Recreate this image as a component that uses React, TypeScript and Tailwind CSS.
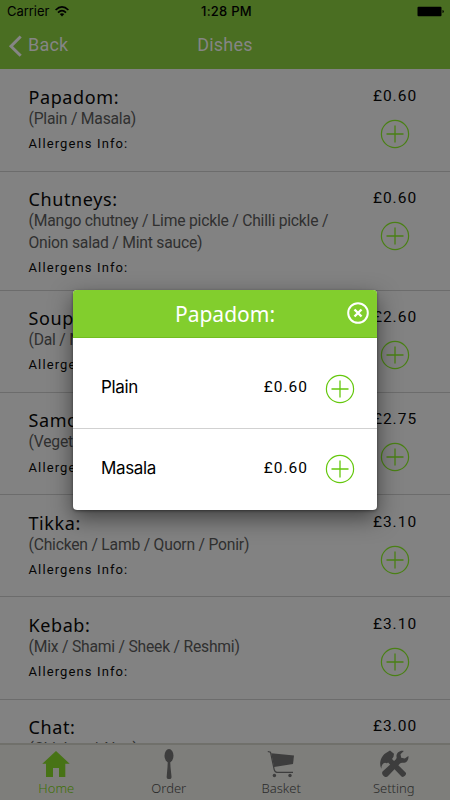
import React from "react";

type Dish = { name: string; lines: string[]; price: string };

const dishes: Dish[] = [
  { name: "Papadom:", lines: ["(Plain / Masala)"], price: "£0.60" },
  { name: "Chutneys:", lines: ["(Mango chutney / Lime pickle / Chilli pickle /", "Onion salad / Mint sauce)"], price: "£0.60" },
  { name: "Soup:", lines: ["(Dal / Mix)"], price: "£2.60" },
  { name: "Samosa:", lines: ["(Vegetable / Meat)"], price: "£2.75" },
  { name: "Tikka:", lines: ["(Chicken / Lamb / Quorn / Ponir)"], price: "£3.10" },
  { name: "Kebab:", lines: ["(Mix / Shami / Sheek / Reshmi)"], price: "£3.10" },
  { name: "Chat:", lines: ["(Chicken / Aloo)"], price: "£3.00" },
];

function Plus({ className }: { className: string }) {
  return (
    <svg className={`h-[30px] w-[30px] shrink-0 ${className}`} viewBox="0 0 30 30" fill="none" stroke="currentColor">
      <circle cx="15" cy="15" r="13.6" strokeWidth="1.2" />
      <path d="M15 6.5v17M6.5 15h17" strokeWidth="1.3" />
    </svg>
  );
}

function DishRow({ dish }: { dish: Dish }) {
  return (
    <div className="flex min-h-[102.2px] shrink-0 justify-between border-b border-[#6c6c6c] pt-[16.4px] pr-[33px] pb-[12.2px] pl-[28.5px]">
      <div className="whitespace-nowrap">
        <div className="h-[22px] font-['Noto_Sans',sans-serif] text-[18px] leading-[22px] tracking-[0.6px] text-[#050505]">{dish.name}</div>
        {dish.lines.map((line) => (
          <div key={line} className="h-[21.5px] font-[Roboto,sans-serif] text-[15.7px] leading-[22px] tracking-[-0.22px] text-[#303030]">{line}</div>
        ))}
        <div className="mt-[3.6px] h-[21px] font-[Roboto,sans-serif] text-[13px] leading-[21px] tracking-[1.12px] text-[#050505]">Allergens Info:</div>
      </div>
      <div className="flex w-[44px] flex-col items-center">
        <div className="h-[19px] font-[Roboto,sans-serif] text-[15.5px] leading-[20px] tracking-[1px] text-[#050505]">{dish.price}</div>
        <Plus className="mt-[14px] text-[#4a8015]" />
      </div>
    </div>
  );
}

function HomeIcon() {
  return (
    <svg className="h-[32px] w-[32px]" viewBox="0 0 32 32" fill="currentColor">
      <path d="M16 3 2.3 15.7H6V29h7V20h6v9h6.3V15.7h4.4z" />
    </svg>
  );
}
function SpoonIcon() {
  return (
    <svg className="h-[32px] w-[32px]" viewBox="0 0 32 32" fill="currentColor">
      <ellipse cx="16" cy="7.8" rx="4.5" ry="6.8" />
      <path d="M14.8 13h2.4l.3 6 1 9.5c.2 1.7-.9 2.6-2.4 2.6s-2.6-.9-2.4-2.6l.8-9.5z" />
    </svg>
  );
}
function CartIcon() {
  return (
    <svg className="h-[32px] w-[32px]" viewBox="0 0 32 32" fill="currentColor">
      <path d="M6.2 5.3 29 7.4 28 16 9 19z" />
      <path d="M2.8 3.5 5.5 4.2 9.2 21.7Q9.8 24.3 12 24.3H28" fill="none" stroke="currentColor" strokeWidth="1.2" />
      <circle cx="9.4" cy="27.5" r="1.7" />
      <circle cx="25" cy="27.5" r="1.7" />
    </svg>
  );
}
function ToolsIcon() {
  return (
    <svg className="h-[32px] w-[32px]" viewBox="0 0 32 32" fill="currentColor">
      <path d="M9.2 4.2 12 2.6l4 3.2-.5 3-1.5 2.2 13.6 13.4c1.8 1.9-2.1 5.9-4.1 4.1L10.1 14.4c-.8 1-2.2 1-3 .3-2.2.2-3.7 2.2-3.8 6-2.7-5.2-.4-13.5 5.9-16.5z" />
      <path d="M25.8 2.9c-4.1-1-8.1 2.2-7.2 6.2.2 1-.2 1.8-.9 2.5L4.8 23.3c-2.5 2.5 2.5 7.5 5 5L22 15.6c.7-.7 1.5-.9 2.5-.8 4 .4 6.4-2.9 5.9-6.9l-3.6 2.7-3.6-.9-.7-3.4z" />
    </svg>
  );
}

const tabs = [
  { label: "Home", Icon: HomeIcon, active: true },
  { label: "Order", Icon: SpoonIcon, active: false },
  { label: "Basket", Icon: CartIcon, active: false },
  { label: "Setting", Icon: ToolsIcon, active: false },
];

function Option({ name, last }: { name: string; last?: boolean }) {
  return (
    <div className={`flex shrink-0 items-center pr-[22px] pl-7 ${last ? "h-[80px]" : "h-[91px] border-b border-[#d1d1d1] pt-[11px]"}`}>
      <span className="flex-1 pb-px font-[Inter,sans-serif] text-[17px] tracking-[-0.35px] text-black">{name}</span>
      <span className="mr-[17px] pb-px font-[Roboto,sans-serif] text-[15.5px] tracking-[1px] text-black">£0.60</span>
      <Plus className="text-[#65c80e]" />
    </div>
  );
}

export default function App() {
  return (
    <div className="relative flex h-[800px] w-[450px] flex-col overflow-hidden bg-[#828282]">
      <header className="flex h-[69px] shrink-0 flex-col bg-[#4a6e22]">
        <div className="grid h-[23px] grid-cols-3 items-center pr-[6px] pl-[7px] font-[Inter,sans-serif] text-[13px] leading-[23px] text-black">
          <div className="flex items-center gap-[6px]">
            <span className="tracking-[-0.05px]">Carrier</span>
            <svg className="mb-px h-[11px] w-[14px]" viewBox="0 0 14 11" fill="none" stroke="black" strokeWidth="1.7">
              <path d="M.6 4Q7-2.1 13.4 4M3 6.6Q7 2.8 11 6.6" />
              <path d="M7 10.4 4.7 8.1Q7 6.2 9.3 8.1Z" fill="black" stroke="none" />
            </svg>
          </div>
          <span className="pl-[2px] text-center font-medium tracking-[0.25px] whitespace-nowrap">1:28 PM</span>
          <svg className="mb-px h-[11px] w-[27px] justify-self-end" viewBox="0 0 27 11">
            <rect x=".5" y=".8" width="24" height="9.5" rx="1" />
            <path d="M25.5 4q1.3.3 1.3 1.5t-1.3 1.5z" />
          </svg>
        </div>
        <div className="grid h-[46px] grid-cols-3 items-center font-[Roboto,sans-serif] text-[18px] text-[#858585]">
          <div className="flex items-center gap-[6px] pl-2">
            <svg className="h-[22px] w-[14px]" viewBox="0 0 14 22" fill="none" stroke="currentColor" strokeWidth="3">
              <path d="M12.7 1.5 3 11.2l9.7 9.5" />
            </svg>
            <span className="pb-[3px] tracking-[0.2px]">Back</span>
          </div>
          <span className="pb-[3px] text-center tracking-[0.2px]">Dishes</span>
        </div>
      </header>

      <main className="flex min-h-0 flex-1 flex-col overflow-hidden pt-[0.5px]">
        {dishes.map((dish) => (
          <DishRow key={dish.name} dish={dish} />
        ))}
      </main>

      <nav className="grid h-[57px] shrink-0 grid-cols-4 border-t-2 border-[#70706b] bg-[#7e7e7b]">
        {tabs.map(({ label, Icon, active }) => (
          <div key={label} className={`flex flex-col items-center pt-[3px] ${active ? "text-[#477315]" : "text-[#3d3d3d]"}`}>
            <Icon />
            <span className={`font-['Noto_Sans',sans-serif] text-[13px] leading-[17px] font-light ${active ? "text-[#3f7008]" : "text-[#2a2a2a]"}`}>{label}</span>
          </div>
        ))}
      </nav>

      <div className="absolute inset-0 flex items-start justify-center pt-[290px]">
        <section className="flex h-[220px] w-[304px] flex-col overflow-hidden rounded-[4px] bg-white shadow-[0_8px_22px_rgba(0,0,0,0.5),0_1px_3px_rgba(0,0,0,0.4)]">
          <div className="grid h-12 shrink-0 grid-cols-[32px_1fr_32px] items-center border-b border-[#72bd20] bg-[#82ce2d] text-white">
            <span />
            <h2 className="text-center font-['Noto_Sans',sans-serif] text-[21px] leading-[28px]">Papadom:</h2>
            <svg className="ml-[1.5px] -mt-[2px] h-[22px] w-[22px]" viewBox="0 0 22 22" fill="none" stroke="currentColor">
              <circle cx="11" cy="11" r="9.8" strokeWidth="2" />
              <path d="m7.5 7.5 7 7m0-7-7 7" strokeWidth="2.4" />
            </svg>
          </div>
          <Option name="Plain" />
          <Option name="Masala" last />
        </section>
      </div>
    </div>
  );
}
